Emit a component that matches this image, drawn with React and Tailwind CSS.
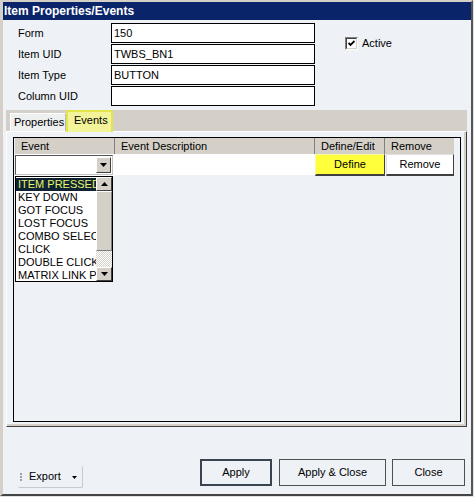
import React from "react";

const events = [
  "ITEM PRESSED",
  "KEY DOWN",
  "GOT FOCUS",
  "LOST FOCUS",
  "COMBO SELECT",
  "CLICK",
  "DOUBLE CLICK",
  "MATRIX LINK PRESSED",
];

const fields = [
  ["Form", "150"],
  ["Item UID", "TWBS_BN1"],
  ["Item Type", "BUTTON"],
  ["Column UID", ""],
];

function DownArrow() {
  return (
    <svg width="7" height="4" viewBox="0 0 7 4">
      <polygon points="0,0 7,0 3.5,4" fill="#000" />
    </svg>
  );
}

function UpArrow() {
  return (
    <svg width="7" height="4" viewBox="0 0 7 4">
      <polygon points="0,4 7,4 3.5,0" fill="#000" />
    </svg>
  );
}

// classic raised 3D button face
function Bevel({ className, children }) {
  return (
    <div
      className={
        "flex items-center justify-center bg-[#d4d0c8] border border-t-white border-l-white border-r-[#404040] border-b-[#404040] " +
        className
      }
    >
      {children}
    </div>
  );
}

export default function App() {
  return (
    <div className="w-[474px] h-[497px] bg-[#e2e2e2] overflow-hidden font-['Liberation_Sans',Arial,sans-serif] text-[11px] text-black">
      <div className="w-[473px] h-[496px] flex flex-col bg-[#eef2f6] border-t-2 border-l-[3px] border-t-[#d4d0c8] border-l-[#d4d0c8] border-r-2 border-r-[#555555] border-b-2 border-b-[#444444]">
        {/* title bar */}
        <div className="h-[18px] shrink-0 bg-[#0a246a] text-white font-bold text-[12px] leading-[18px] pl-[1px]">
          Item Properties/Events
        </div>

        {/* header fields */}
        <div className="flex pl-[15px] pt-[3px]">
          <div className="flex flex-col gap-[1px]">
            {fields.map(([label, value]) => (
              <div key={label} className="flex items-center h-[20px]">
                <div className="w-[93px]">{label}</div>
                <div className="w-[204px] h-[20px] border border-black bg-white pl-[2px] leading-[18px]">
                  {value}
                </div>
              </div>
            ))}
          </div>
          <div className="ml-[30px] mt-[14px] flex items-center h-[13px]">
            <div className="w-[13px] h-[13px] border border-t-[#808080] border-l-[#808080] border-r-white border-b-white">
              <div className="w-full h-full bg-white border border-t-[#404040] border-l-[#404040] border-r-[#d4d0c8] border-b-[#d4d0c8] flex items-center justify-center">
                <svg width="7" height="7" viewBox="0 0 7 7">
                  <polyline points="0.5,3 2.5,5 6.5,1" fill="none" stroke="#000" strokeWidth="1.8" />
                </svg>
              </div>
            </div>
            <span className="ml-[4px]">Active</span>
          </div>
        </div>

        {/* tab control */}
        <div className="ml-[3px] mt-[4px] w-[461px] flex flex-col">
          <div className="h-[21px] bg-[#d4d0c8] flex items-end pl-[4px]">
            <div className="w-[56px] h-[18px] bg-[#eef0f0] border-t border-l border-white border-r border-r-[#b8b8b8] pl-[3px] leading-[17px] whitespace-nowrap">
              Properties
            </div>
            <div className="relative z-10 w-[47px] h-[22px] mb-[-1px] bg-[#f3f39a] border-2 border-b-0 border-[#e4e44c] pl-[6px] leading-[16px]">
              Events
            </div>
          </div>

          <div className="h-[296px] border-t border-l border-t-white border-l-white border-r border-b border-r-[#404040] border-b-[#404040]">
            <div className="h-full flex flex-col border-r-2 border-b-2 border-[#d4d0c8] pl-[6px] pt-[5px] pr-[3px] pb-[2px]">
              {/* events grid */}
              <div className="relative flex-1 border border-black bg-[#eef2f6] pl-[1px]">
                <div className="flex h-[16px] leading-[16px]">
                  <div className="w-[100px] bg-[#d4d0c8] border-r border-r-[#808080] pl-[6px]">Event</div>
                  <div className="w-[200px] bg-[#d4d0c8] border-r border-r-[#808080] pl-[6px]">Event Description</div>
                  <div className="w-[70px] bg-[#d4d0c8] border-r border-r-[#808080] pl-[6px]">Define/Edit</div>
                  <div className="w-[69px] bg-[#d4d0c8] pl-[6px]">Remove</div>
                </div>

                <div className="flex h-[22px]">
                  <div className="w-[100px] bg-white pt-[1px]">
                    <div className="w-[98px] h-[20px] bg-white border border-t-[#555555] border-l-[#555555] border-r-[#c0c0c0] border-b-[#c0c0c0] flex justify-end items-center pr-[1px]">
                      <Bevel className="w-[15px] h-[16px]">
                        <DownArrow />
                      </Bevel>
                    </div>
                  </div>
                  <div className="w-[200px] bg-white h-[21px]" />
                  <div className="w-[70px] h-[22px] bg-[#ffff3c] border border-t-[#f8f8a0] border-l-[#f8f8a0] border-r-[#404040] border-b-2 border-b-[#404040] flex items-center justify-center">
                    Define
                  </div>
                  <div className="ml-[1px] w-[68px] h-[22px] bg-white border border-t-[#e0e0e0] border-l-[#e0e0e0] border-r-[#404040] border-b-2 border-b-[#404040] flex items-center justify-center">
                    Remove
                  </div>
                </div>

                {/* open event list */}
                <div className="absolute left-[1px] top-[38px] w-[98px] h-[106px] border border-black bg-white flex">
                  <div className="flex-1 overflow-hidden pt-[1px]">
                    {events.map((e, i) => (
                      <div
                        key={e}
                        className={
                          "h-[13px] leading-[13px] pl-[2px] whitespace-nowrap overflow-hidden " +
                          (i === 0 ? "bg-[#0e2233] text-[#e8f56c]" : "")
                        }
                      >
                        {e}
                      </div>
                    ))}
                  </div>
                  <div className="w-[16px] flex flex-col bg-[#e6e4de]">
                    <Bevel className="w-[16px] h-[14px] shrink-0">
                      <UpArrow />
                    </Bevel>
                    <div className="h-[60px] shrink-0 bg-[#d4d0c8] border border-t-white border-l-white border-r-[#808080] border-b-[#808080]" />
                    <div className="flex-1 bg-[repeating-conic-gradient(#ffffff_0%_25%,#d4d0c8_0%_50%)] bg-[length:2px_2px]" />
                    <Bevel className="w-[16px] h-[14px] shrink-0">
                      <DownArrow />
                    </Bevel>
                  </div>
                </div>
              </div>
            </div>
          </div>
        </div>

        {/* bottom buttons */}
        <div className="flex flex-1">
          <div className="ml-[15px] mt-[39px] w-[65px] h-[22px] flex items-center border-r border-b border-[#c6cad0] rounded-[2px]">
            <div className="ml-[2px] flex flex-col gap-[1px]">
              <div className="w-[2px] h-[2px] bg-[#9aa0a8]" />
              <div className="w-[2px] h-[2px] bg-[#9aa0a8]" />
              <div className="w-[2px] h-[2px] bg-[#9aa0a8]" />
            </div>
            <span className="ml-[7px]">Export</span>
            <span className="ml-[11px] mt-[1px]">
              <svg width="5" height="3" viewBox="0 0 5 3">
                <polygon points="0,0 5,0 2.5,3" fill="#000" />
              </svg>
            </span>
          </div>
          <div className="ml-[117px] mt-[32px] w-[72px] h-[27px] border-2 border-[#3a4350] flex items-center justify-center">
            Apply
          </div>
          <div className="ml-[7px] mt-[32px] w-[107px] h-[27px] border border-[#505050] flex items-center justify-center">
            Apply &amp; Close
          </div>
          <div className="ml-[6px] mt-[32px] w-[73px] h-[27px] border border-[#505050] flex items-center justify-center">
            Close
          </div>
        </div>
      </div>
    </div>
  );
}
